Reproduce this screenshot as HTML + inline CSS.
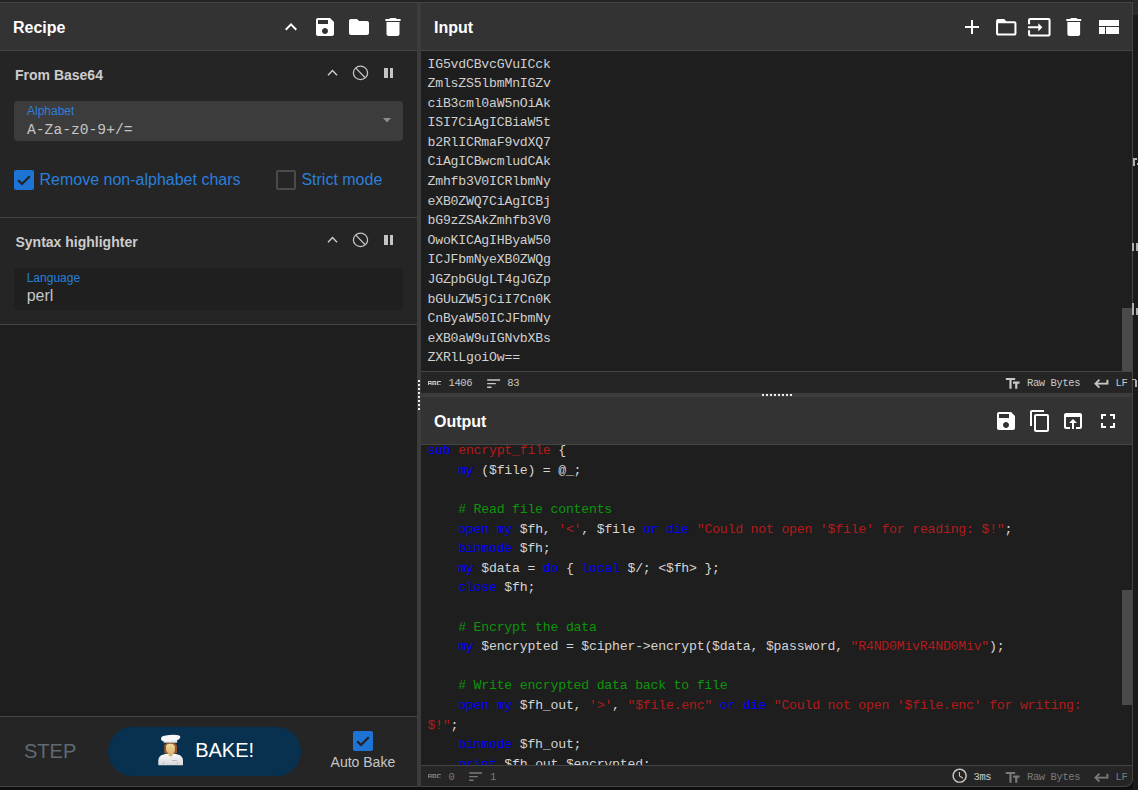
<!DOCTYPE html>
<html><head><meta charset="utf-8">
<style>
*{margin:0;padding:0;box-sizing:border-box}
html,body{width:1138px;height:790px;overflow:hidden;background:#0f0f0f;font-family:"Liberation Sans",sans-serif}
.a{position:absolute}
.t{position:absolute;line-height:1;white-space:pre}
.code{position:absolute;white-space:pre;font-size:13.2px;letter-spacing:-0.22px;line-height:19.6px}
.k{color:#0000ff}.s{color:#b31b1b}.c{color:#0c960c}
.st{font-size:10.5px;letter-spacing:-0.4px}
.mono{font-family:"Liberation Mono",monospace}
svg{position:absolute;display:block}
</style></head><body>
<!-- top band -->
<div class="a" style="left:0;top:0;width:1138px;height:2px;background:#232323"></div>

<!-- LEFT PANEL -->
<div class="a" style="left:0;top:2px;width:417px;height:49px;background:#333;border-top:1px solid #444;border-bottom:1px solid #444"></div>
<div class="t" style="left:13px;top:19.5px;font-size:16px;font-weight:bold;color:#fff">Recipe</div>
<div class="a" style="left:0;top:51px;width:417px;height:665px;background:#222"></div>


<!-- op areas -->
<div class="a" style="left:0;top:51px;width:417px;height:274px;background:#252525;border-bottom:1px solid #444"></div>
<div class="a" style="left:0;top:217px;width:417px;height:1px;background:#444"></div>
<div class="a" style="left:0;top:325px;width:417px;height:391px;background:#1e1e1e"></div>
<!-- recipe header icons -->
<svg style="left:279px;top:15px" width="24" height="24" viewBox="0 0 24 24"><path fill="#fff" d="M7.41 15.41L12 10.83l4.59 4.58L18 14l-6-6-6 6z"/></svg>
<svg style="left:313px;top:15px" width="24" height="24" viewBox="0 0 24 24"><path fill="#fff" d="M17 3H5c-1.11 0-2 .9-2 2v14c0 1.1.89 2 2 2h14c1.1 0 2-.9 2-2V7l-4-4zm-5 16c-1.66 0-3-1.34-3-3s1.34-3 3-3 3 1.34 3 3-1.34 3-3 3zm3-10H5V5h10v4z"/></svg>
<svg style="left:347px;top:15px" width="24" height="24" viewBox="0 0 24 24"><path fill="#fff" d="M10 4H4c-1.1 0-1.99.9-1.99 2L2 18c0 1.1.9 2 2 2h16c1.1 0 2-.9 2-2V8c0-1.1-.9-2-2-2h-8l-2-2z"/></svg>
<svg style="left:379.8px;top:15px" width="26" height="24" viewBox="0 0 24 24" preserveAspectRatio="none"><path fill="#fff" d="M6 19c0 1.1.9 2 2 2h8c1.1 0 2-.9 2-2V7H6v12zM19 4h-3.5l-1-1h-5l-1 1H5v2h14V4z"/></svg>

<!-- op1 -->
<div class="t" style="left:15px;top:68.2px;font-size:14px;font-weight:bold;color:#ccc">From Base64</div>
<svg style="left:322px;top:63px" width="20" height="20" viewBox="0 0 20 20"><path d="M6 12.3L10.5 7.6L15 12.3" fill="none" stroke="#cfcfcf" stroke-width="1.35"/></svg>
<svg style="left:352px;top:65px" width="17" height="16" viewBox="0 0 17 16"><ellipse cx="8.5" cy="7.9" rx="7.1" ry="6.7" fill="none" stroke="#c5c5c5" stroke-width="1.25"/><path d="M3.8 3.1L13.2 12.7" stroke="#c5c5c5" stroke-width="1.25"/></svg>
<div class="a" style="left:384px;top:68px;width:3.5px;height:10px;background:#c5c5c5"></div>
<div class="a" style="left:389.5px;top:68px;width:3.5px;height:10px;background:#c5c5c5"></div>
<div class="a" style="left:14px;top:101px;width:389px;height:40px;background:#3c3c3c;border-radius:4px"></div>
<div class="t" style="left:27px;top:104.8px;font-size:12px;color:#2a7fdb">Alphabet</div>
<div class="t mono" style="left:27px;top:122.5px;font-size:14.67px;color:#c5c5c5">A-Za-z0-9+/=</div>
<svg style="left:383px;top:118px" width="8" height="5" viewBox="0 0 8 5"><path d="M0 0H8L4 4.5z" fill="#8a8f94"/></svg>
<div class="a" style="left:14px;top:170px;width:20px;height:20px;background:#1e74d4;border-radius:2px"></div>
<svg style="left:14px;top:170px" width="20" height="20" viewBox="0 0 20 20"><path d="M4.2 10.2L8 14L15.8 6.2" fill="none" stroke="#222" stroke-width="2.2"/></svg>
<div class="t" style="left:39.5px;top:171.5px;font-size:16px;color:#2a7fdb">Remove non-alphabet chars</div>
<div class="a" style="left:276px;top:170px;width:20px;height:20px;border:2px solid #4a4a4a;border-radius:2px"></div>
<div class="t" style="left:301.4px;top:171.5px;font-size:16px;color:#2a7fdb">Strict mode</div>

<!-- op2 -->
<div class="t" style="left:15.5px;top:234.9px;font-size:14px;font-weight:bold;color:#ccc">Syntax highlighter</div>
<svg style="left:322px;top:230px" width="20" height="20" viewBox="0 0 20 20"><path d="M6 12.3L10.5 7.6L15 12.3" fill="none" stroke="#cfcfcf" stroke-width="1.35"/></svg>
<svg style="left:352px;top:232px" width="17" height="16" viewBox="0 0 17 16"><ellipse cx="8.5" cy="7.9" rx="7.1" ry="6.7" fill="none" stroke="#c5c5c5" stroke-width="1.25"/><path d="M3.8 3.1L13.2 12.7" stroke="#c5c5c5" stroke-width="1.25"/></svg>
<div class="a" style="left:384px;top:235px;width:3.5px;height:10px;background:#c5c5c5"></div>
<div class="a" style="left:389.5px;top:235px;width:3.5px;height:10px;background:#c5c5c5"></div>
<div class="a" style="left:14px;top:268px;width:389px;height:42px;background:#1f1f1f;border-radius:4px"></div>
<div class="t" style="left:26.7px;top:271.8px;font-size:12px;color:#2a7fdb">Language</div>
<div class="t" style="left:26.7px;top:287.5px;font-size:16px;color:#c5c5c5">perl</div>

<!-- controls -->
<div class="a" style="left:0;top:716px;width:417px;height:71px;background:#252525;border-top:1px solid #444;border-bottom:1px solid #444"></div>
<div class="t" style="left:24px;top:741.4px;font-size:20px;color:#5f6a73">STEP</div>
<div class="a" style="left:108px;top:727px;width:193px;height:49px;background:#07314f;border-radius:25px"></div>
<svg style="left:150px;top:728px" width="42" height="42" viewBox="0 0 42 42">
<defs><linearGradient id="cg" x1="0" y1="0" x2="0" y2="1"><stop offset="0" stop-color="#fafafa"/><stop offset="1" stop-color="#d9d9d9"/></linearGradient>
<linearGradient id="fg" x1="0" y1="0" x2="0" y2="1"><stop offset="0" stop-color="#f2d79a"/><stop offset="1" stop-color="#d9ac68"/></linearGradient></defs>
<path d="M8.3 37.2V32.5Q8.3 27.6 13.5 26.4L18.3 25.3L22.8 25.3L27.8 26.4Q33 27.6 33 32.5V37.2Z" fill="url(#cg)"/>
<path d="M14.2 25V18.5Q14.2 14.4 20.6 14.4Q27 14.4 27 18.5V25L25 25.5L16 25.5Z" fill="#98552a"/>
<path d="M16.1 17.6Q17 15.4 20.8 15.8Q24.6 16.2 24.9 18.8V22.4Q24.5 25.2 22.6 25.6V27.6Q20.6 29.6 18.6 27.6V25.6Q16.4 24.8 16.1 22Z" fill="url(#fg)"/>
<rect x="13.6" y="11" width="13.5" height="3.7" fill="#e6e6e6"/>
<path d="M11 11.2Q10.8 7.9 15.5 7.5Q21 6.5 26.5 6.9Q30.8 7.2 30.3 9.3Q29.6 11.8 27 12.2L14 13.2Q11.2 13.2 11 11.2Z" fill="#f7f7f7"/>
<rect x="22" y="32" width="5" height="1" fill="#bbb"/>
<rect x="13" y="34.5" width="0.8" height="1.5" fill="#999"/><rect x="27.2" y="34.5" width="0.8" height="1.5" fill="#999"/>
</svg>
<div class="t" style="left:195.2px;top:739.7px;font-size:20px;color:#fff">BAKE!</div>
<div class="a" style="left:353px;top:731px;width:20px;height:20px;background:#1e74d4;border-radius:2px"></div>
<svg style="left:353px;top:731px" width="20" height="20" viewBox="0 0 20 20"><path d="M4.2 10.2L8 14L15.8 6.2" fill="none" stroke="#222" stroke-width="2.2"/></svg>
<div class="t" style="left:330.6px;top:755px;font-size:14px;color:#c5c5c5">Auto Bake</div>

<!-- DIVIDER vertical -->
<div class="a" style="left:417px;top:3px;width:4px;height:784px;background:#3c3c3c"></div>

<!-- INPUT PANEL -->
<div class="a" style="left:421px;top:2px;width:712px;height:49px;background:#333;border-top:1px solid #444;border-bottom:1px solid #444"></div>
<div class="t" style="left:434px;top:19.5px;font-size:16px;font-weight:bold;color:#fff">Input</div>
<div class="a" style="left:421px;top:51px;width:711px;height:320px;background:#1e1e1e"></div>
<div class="a" style="left:421px;top:371px;width:711px;height:22px;background:#252525;border-top:1px solid #444"></div>


<svg style="left:960px;top:15px" width="24" height="24" viewBox="0 0 24 24"><path fill="#fff" d="M19 13h-6v6h-2v-6H5v-2h6V5h2v6h6v2z"/></svg>
<svg style="left:993.5px;top:15px" width="24.5" height="24.5" viewBox="0 0 24 24"><path fill="#fff" d="M20 6h-8l-2-2H4c-1.1 0-1.99.9-1.99 2L2 18c0 1.1.9 2 2 2h16c1.1 0 2-.9 2-2V8c0-1.1-.9-2-2-2zm0 12H4V8h16v10z"/></svg>
<svg style="left:1027.3px;top:14.8px" width="24.6" height="24.6" viewBox="0 0 24 24"><path fill="#fff" d="M21 3.01H3c-1.1 0-2 .9-2 2V9h2V4.99h18v14.03H3V15H1v4.01c0 1.1.9 1.98 2 1.98h18c1.1 0 2-.88 2-1.98v-14c0-1.11-.9-2-2-2zM11 16l4-4-4-4v3H1v2h10v3z"/></svg>
<svg style="left:1061px;top:15px" width="25.5" height="24" viewBox="0 0 24 24" preserveAspectRatio="none"><path fill="#fff" d="M6 19c0 1.1.9 2 2 2h8c1.1 0 2-.9 2-2V7H6v12zM19 4h-3.5l-1-1h-5l-1 1H5v2h14V4z"/></svg>
<div class="a" style="left:1098.5px;top:20px;width:20px;height:6px;background:#fff"></div><div class="a" style="left:1098.5px;top:27px;width:6.7px;height:7px;background:#fff"></div><div class="a" style="left:1106px;top:27px;width:12.5px;height:7px;background:#fff"></div>
<div class="code mono" style="left:427.5px;top:54.5px;color:#d0d0d0">IG5vdCBvcGVuICck
ZmlsZS5lbmMnIGZv
ciB3cml0aW5nOiAk
ISI7CiAgICBiaW5t
b2RlICRmaF9vdXQ7
CiAgICBwcmludCAk
Zmhfb3V0ICRlbmNy
eXB0ZWQ7CiAgICBj
bG9zZSAkZmhfb3V0
OwoKICAgIHByaW50
ICJFbmNyeXB0ZWQg
JGZpbGUgLT4gJGZp
bGUuZW5jCiI7Cn0K
CnByaW50ICJFbmNy
eXB0aW9uIGNvbXBs
ZXRlLgoiOw==</div>
<div class="a" style="left:1122px;top:308px;width:10px;height:63px;background:#4a4a4a"></div>
<!-- input status -->
<svg style="left:428px;top:380.8px" width="13" height="4.4" viewBox="0 0 13 4.4"><path fill="#c8c8c8" fill-rule="evenodd" d="M0 0.6Q0 0 0.6 0H3.6V4.4H2.6V2.9H1V4.4H0ZM1 0.9V2H2.6V0.9ZM4.3 0H7.7Q8.3 0 8.3 0.6V3.8Q8.3 4.4 7.7 4.4H4.3ZM5.3 0.9V1.8H7.3V0.9ZM5.3 2.6V3.5H7.3V2.6ZM9.1 0.6Q9.1 0 9.7 0H13V1H10.2V3.4H13V4.4H9.7Q9.1 4.4 9.1 3.8Z"/></svg>
<div class="t mono st" style="left:448.5px;top:377.5px;color:#c8c8c8">1406</div>
<svg style="left:484.6px;top:374.5px" width="17.3" height="17.3" viewBox="0 0 24 24"><path fill="#c8c8c8" d="M3 18h6v-2H3v2zM3 6v2h18V6H3zm0 7h12v-2H3v2z"/></svg>
<div class="t mono st" style="left:507.3px;top:377.5px;color:#c8c8c8">83</div>
<svg style="left:1004.2px;top:374.9px" width="17.3" height="17.3" viewBox="0 0 24 24"><path fill="#c8c8c8" d="M2.5 4v3h5v12h3V7h5V4h-13zm19 5h-9v3h3v7h3v-7h3V9z"/></svg>
<div class="t mono st" style="left:1027px;top:377.5px;color:#c8c8c8">Raw Bytes</div>
<svg style="left:1093px;top:375px" width="17.3" height="17.3" viewBox="0 0 24 24"><path fill="#c8c8c8" stroke="#c8c8c8" stroke-width="0.7" d="M19 7v4H5.83l3.58-3.59L8 6l-6 6 6 6 1.41-1.41L5.83 13H21V7z"/></svg>
<div class="t mono st" style="left:1115.5px;top:377.5px;color:#c8c8c8">LF</div>
<div class="a" style="left:418px;top:380px;width:2px;height:2px;background:#eee"></div><div class="a" style="left:418px;top:384px;width:2px;height:2px;background:#eee"></div><div class="a" style="left:418px;top:388px;width:2px;height:2px;background:#eee"></div><div class="a" style="left:418px;top:392px;width:2px;height:2px;background:#eee"></div><div class="a" style="left:418px;top:396px;width:2px;height:2px;background:#eee"></div><div class="a" style="left:418px;top:400px;width:2px;height:2px;background:#eee"></div><div class="a" style="left:418px;top:404px;width:2px;height:2px;background:#eee"></div><div class="a" style="left:418px;top:408px;width:2px;height:2px;background:#eee"></div>
<div class="a" style="left:417px;top:2px;width:4px;height:1px;background:#444"></div>
<!-- DIVIDER horizontal -->
<div class="a" style="left:421px;top:393px;width:712px;height:4px;background:#3c3c3c"></div>

<div class="a" style="left:762px;top:394px;width:2px;height:2px;background:#eee"></div><div class="a" style="left:766px;top:394px;width:2px;height:2px;background:#eee"></div><div class="a" style="left:770px;top:394px;width:2px;height:2px;background:#eee"></div><div class="a" style="left:774px;top:394px;width:2px;height:2px;background:#eee"></div><div class="a" style="left:778px;top:394px;width:2px;height:2px;background:#eee"></div><div class="a" style="left:782px;top:394px;width:2px;height:2px;background:#eee"></div><div class="a" style="left:786px;top:394px;width:2px;height:2px;background:#eee"></div><div class="a" style="left:790px;top:394px;width:2px;height:2px;background:#eee"></div>
<!-- OUTPUT PANEL -->
<div class="a" style="left:421px;top:397px;width:712px;height:48px;background:#333;border-bottom:1px solid #444"></div>
<div class="t" style="left:434px;top:413.5px;font-size:16px;font-weight:bold;color:#fff">Output</div>
<div class="a" style="left:421px;top:445px;width:711px;height:320px;background:#1e1e1e"></div>
<div class="a" style="left:421px;top:765px;width:712px;height:22px;background:#252525;border-top:1px solid #444;border-bottom:1px solid #444;border-right:1px solid #444;border-bottom-right-radius:8px"></div>


<svg style="left:993.5px;top:409px" width="24" height="24" viewBox="0 0 24 24"><path fill="#fff" d="M17 3H5c-1.11 0-2 .9-2 2v14c0 1.1.89 2 2 2h14c1.1 0 2-.9 2-2V7l-4-4zm-5 16c-1.66 0-3-1.34-3-3s1.34-3 3-3 3 1.34 3 3-1.34 3-3 3zm3-10H5V5h10v4z"/></svg>
<svg style="left:1027.5px;top:409px" width="24" height="24" viewBox="0 0 24 24"><path fill="#fff" d="M16 1H4c-1.1 0-2 .9-2 2v14h2V3h12V1zm3 4H8c-1.1 0-2 .9-2 2v14c0 1.1.9 2 2 2h11c1.1 0 2-.9 2-2V7c0-1.1-.9-2-2-2zm0 16H8V7h11v14z"/></svg>
<svg style="left:1061px;top:409px" width="24" height="24" viewBox="0 0 24 24"><path fill="#fff" d="M19 4H5c-1.11 0-2 .9-2 2v12c0 1.1.89 2 2 2h4v-2H5V8h14v10h-4v2h4c1.1 0 2-.89 2-2V6c0-1.1-.89-2-2-2zm-7 6l-4 4h3v6h2v-6h3l-4-4z"/></svg>
<svg style="left:1095.5px;top:409px" width="24" height="24" viewBox="0 0 24 24"><path fill="#fff" d="M7 14H5v5h5v-2H7v-3zm-2-4h2V7h3V5H5v5zm12 7h-3v2h5v-5h-2v3zM14 5v2h3v3h2V5h-5z"/></svg>
<div class="a" style="left:421px;top:445px;width:711px;height:320px;overflow:hidden"><div class="code mono" style="left:6.4px;top:-3.8px;color:#d4d4d4"><span class="k">sub</span> <span class="s">encrypt_file</span> {
    <span class="k">my</span> ($file) = @_;

    <span class="c"># Read file contents</span>
    <span class="k">open</span> <span class="k">my</span> $fh, <span class="s">'&lt;'</span>, $file <span class="k">or</span> <span class="k">die</span> <span class="s">"Could not open '$file' for reading: $!"</span>;
    <span class="k">binmode</span> $fh;
    <span class="k">my</span> $data = <span class="k">do</span> { <span class="k">local</span> $/; &lt;$fh&gt; };
    <span class="k">close</span> $fh;

    <span class="c"># Encrypt the data</span>
    <span class="k">my</span> $encrypted = $cipher-&gt;encrypt($data, $password, <span class="s">"R4ND0MivR4ND0Miv"</span>);

    <span class="c"># Write encrypted data back to file</span>
    <span class="k">open</span> <span class="k">my</span> $fh_out, <span class="s">'&gt;'</span>, <span class="s">"$file.enc"</span> <span class="k">or</span> <span class="k">die</span> <span class="s">"Could not open '$file.enc' for writing: </span>
<span class="s">$!"</span>;
    <span class="k">binmode</span> $fh_out;
    <span class="k">print</span> $fh_out $encrypted;</div></div>
<div class="a" style="left:1122px;top:590px;width:10px;height:115px;background:#4a4a4a"></div>
<!-- output status -->
<svg style="left:428px;top:773.9px" width="13" height="4.4" viewBox="0 0 13 4.4"><path fill="#7a7a7a" fill-rule="evenodd" d="M0 0.6Q0 0 0.6 0H3.6V4.4H2.6V2.9H1V4.4H0ZM1 0.9V2H2.6V0.9ZM4.3 0H7.7Q8.3 0 8.3 0.6V3.8Q8.3 4.4 7.7 4.4H4.3ZM5.3 0.9V1.8H7.3V0.9ZM5.3 2.6V3.5H7.3V2.6ZM9.1 0.6Q9.1 0 9.7 0H13V1H10.2V3.4H13V4.4H9.7Q9.1 4.4 9.1 3.8Z"/></svg>
<div class="t mono st" style="left:448.5px;top:771.7px;color:#7a7a7a">0</div>
<svg style="left:467.4px;top:768.2px" width="17.3" height="17.3" viewBox="0 0 24 24"><path fill="#7a7a7a" d="M3 18h6v-2H3v2zM3 6v2h18V6H3zm0 7h12v-2H3v2z"/></svg>
<div class="t mono st" style="left:490px;top:771.7px;color:#7a7a7a">1</div>
<svg style="left:950.8px;top:767px" width="17.3" height="17.3" viewBox="0 0 24 24"><path fill="#c8c8c8" d="M11.99 2C6.47 2 2 6.48 2 12s4.47 10 9.99 10C17.52 22 22 17.52 22 12S17.52 2 11.99 2zM12 20c-4.42 0-8-3.58-8-8s3.58-8 8-8 8 3.58 8 8-3.58 8-8 8zm.5-13H11v6l5.25 3.15.75-1.23-4.5-2.67z"/></svg>
<div class="t mono st" style="left:973.5px;top:771.7px;color:#c8c8c8">3ms</div>
<svg style="left:1004.2px;top:769.1px" width="17.3" height="17.3" viewBox="0 0 24 24"><path fill="#7a7a7a" d="M2.5 4v3h5v12h3V7h5V4h-13zm19 5h-9v3h3v7h3v-7h3V9z"/></svg>
<div class="t mono st" style="left:1027px;top:771.7px;color:#7a7a7a">Raw Bytes</div>
<svg style="left:1093px;top:769.2px" width="17.3" height="17.3" viewBox="0 0 24 24"><path fill="#7a7a7a" stroke="#7a7a7a" stroke-width="0.7" d="M19 7v4H5.83l3.58-3.59L8 6l-6 6 6 6 1.41-1.41L5.83 13H21V7z"/></svg>
<div class="t mono st" style="left:1115.5px;top:771.7px;color:#7a7a7a">LF</div>
<!-- right border -->
<div class="a" style="left:1132px;top:2px;width:1px;height:763px;background:#444"></div>
<div class="a" style="left:1133px;top:0;width:5px;height:15px;background:#2a2a2a"></div>
<div class="a" style="left:1133px;top:15px;width:5px;height:775px;background:#1a1a1a"></div>

<div class="a" style="left:1132.7px;top:158px;width:2px;height:8px;background:#b0b0b0"></div><div class="a" style="left:1134.5px;top:158px;width:2.5px;height:1.6px;background:#b0b0b0"></div><div class="a" style="left:1137px;top:163px;width:1px;height:2px;background:#b0b0b0"></div><div class="a" style="left:1132.2px;top:243px;width:1.8px;height:8px;background:#b0b0b0"></div><div class="a" style="left:1136px;top:243px;width:2px;height:8px;background:#b0b0b0"></div><div class="a" style="left:1132.2px;top:303px;width:1.8px;height:12px;background:#b0b0b0"></div><div class="a" style="left:1136px;top:308px;width:2px;height:7px;background:#b0b0b0"></div><div class="a" style="left:1132.2px;top:379px;width:4px;height:1.4px;background:#b0b0b0"></div><div class="a" style="left:1135px;top:380.2px;width:2px;height:6.8px;background:#b0b0b0"></div>
</body></html>
